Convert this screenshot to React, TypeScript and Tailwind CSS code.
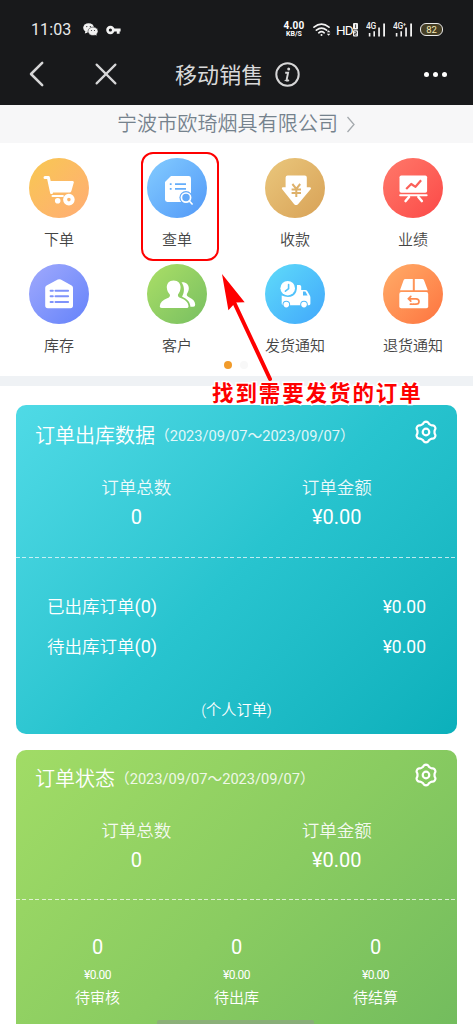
import type { ReactNode } from "react";

const LATIN = "font-['Roboto','Noto_Sans_CJK_SC',sans-serif]";

function StatusBar() {
  return (
    <div className="flex h-[43px] items-end justify-between pl-[31px] pr-[30px] text-white">
      <div className="flex h-[27px] items-center">
        <span className="w-[42px] text-[16px] leading-[27px] tracking-[0.1px] text-[#e9e9ea]">11:03</span>
        <svg className="ml-[10px]" width="15" height="13" viewBox="0 0 15 13">
          <ellipse cx="5.6" cy="4.8" rx="5.4" ry="4.6" fill="#f2f2f2" />
          <path d="M2.4 8l-.6 2.6 3-1.2z" fill="#f2f2f2" />
          <ellipse cx="10" cy="8.3" rx="5" ry="4.2" fill="#f2f2f2" stroke="#18191b" strokeWidth=".5" />
          <path d="M11.6 11.4l1.9 1.3-.2-2.2z" fill="#f2f2f2" />
          <circle cx="3.8" cy="3.6" r=".6" fill="#18191b" />
          <circle cx="7.3" cy="3.6" r=".6" fill="#18191b" />
          <circle cx="8.4" cy="7.4" r=".5" fill="#18191b" />
          <circle cx="11.5" cy="7.4" r=".5" fill="#18191b" />
        </svg>
        <svg className="ml-[8px]" width="15" height="10" viewBox="0 0 15 10" fill="none" stroke="#f2f2f2">
          <circle cx="4.4" cy="5" r="2.9" strokeWidth="2.6" />
          <path d="M7.5 5H14.6M12.2 5V8.8" strokeWidth="2.8" />
        </svg>
      </div>
      <div className="flex h-[27px] items-center">
        <div className="flex w-[22px] flex-col items-center font-bold">
          <span className="text-[10px] leading-[9px] tracking-[0.2px]">4.00</span>
          <span className="text-[7px] leading-[8px]">KB/S</span>
        </div>
        <svg className="ml-[8px]" width="19" height="14" viewBox="0 0 19 14" fill="none" stroke="#f2f2f2" strokeLinecap="round">
          <path d="M1 4.2Q8.5-1.8 16 4.2M3.4 7.2Q8.5 3 13.6 7.2M5.8 9.8Q8.5 7.6 11.2 9.8" strokeWidth="1.7" />
          <circle cx="8.5" cy="12" r="1" fill="#f2f2f2" stroke="none" />
          <path d="M13.8 9.2l1.8-2 1.8 2zM13.8 10.8l1.8 2 1.8-2z" fill="#f2f2f2" stroke="none" />
        </svg>
        <span className="ml-[4px] w-[17px] text-[13.5px] leading-[14px] tracking-[-1px]">HD</span>
        <svg width="6" height="14" viewBox="0 0 6 14">
          <rect x="0" y="0" width="5" height="6.4" rx="1" fill="#f2f2f2" />
          <rect x="0" y="7.2" width="5" height="6.4" rx="1" fill="#f2f2f2" />
          <path d="M2.6 1.4V5M1.4 8.8H3.4V10.4H1.6V12H3.6" stroke="#18191b" strokeWidth=".8" fill="none" />
        </svg>
        <Signal label="4G" />
        <Signal label="4G⁺" />
        <div className="ml-[7px] flex h-[13px] w-[23px] items-center justify-center rounded-[6px] border-[1.5px] border-[#e9e9ea] bg-[#453e25] text-[9.5px] leading-[10px] text-[#f5e8b4]">
          82
        </div>
      </div>
    </div>
  );
}

function Signal({ label }: { label: string }) {
  return (
    <svg className="ml-[7px]" width="20" height="15" viewBox="0 0 20 15" fill="#f2f2f2">
      <text x="0" y="6.8" fontSize="8.4" fontFamily="Roboto" fontWeight="500" letterSpacing="-0.3">{label}</text>
      <path d="M2.8 11h1.6v3.5H2.8zM7.4 9.2H9v5.3H7.4zM12.2 5.4h1.7v9.1h-1.7zM17.2 1.5h1.8v13h-1.8z" />
    </svg>
  );
}

function NavBar() {
  return (
    <div className="flex h-[62px] items-center">
      <svg className="ml-[29px]" width="16" height="26" viewBox="0 0 16 26" fill="none" stroke="#d6d6d7" strokeWidth="2.5" strokeLinecap="round" strokeLinejoin="round">
        <path d="M13.2 1.8L2 13l11.2 11.2" />
      </svg>
      <svg className="ml-[50px]" width="22" height="22" viewBox="0 0 22 22" fill="none" stroke="#d6d6d7" strokeWidth="2.2" strokeLinecap="round">
        <path d="M1.6 1.6l18.8 18.8M20.4 1.6L1.6 20.4" />
      </svg>
      <h1 className="mt-[3px] ml-[58px] w-[90px] text-[22px] leading-[30px] tracking-[0.1px] whitespace-nowrap text-[#d9d9da]">移动销售</h1>
      <svg className="ml-[10px]" width="25" height="25" viewBox="0 0 25 25" fill="none" stroke="#d6d6d7">
        <circle cx="12.5" cy="12.5" r="11.2" strokeWidth="2" />
        <circle cx="13.7" cy="7" r="1.5" fill="#d6d6d7" stroke="none" />
        <path d="M10.2 10.8h2.9l-1.5 7.2q-.2 1.2 2.2.2" strokeWidth="1.9" />
        <path d="M9.6 18.6h4.6" strokeWidth="1" />
      </svg>
      <div className="ml-[124px] flex gap-[4px]">
        <i className="size-[5px] rounded-full bg-white" />
        <i className="size-[5px] rounded-full bg-white" />
        <i className="size-[5px] rounded-full bg-white" />
      </div>
    </div>
  );
}

const actions: { label: string; tone: string; icon: ReactNode }[] = [
  {
    label: "下单",
    tone: "from-[#f8c850] to-[#ffac74]",
    icon: (
      <>
        <path d="M16 19.6h3.4L22.6 34.6" fill="none" stroke="#fff" strokeWidth="3" strokeLinecap="round" strokeLinejoin="round" />
        <path d="M21 23h22.6q1.6 0 1.2 1.6L42.4 33q-.5 1.6-2 1.6H23.4z" />
        <path d="M23.6 38h10.2" stroke="#fff" strokeWidth="2.2" strokeLinecap="round" />
        <circle cx="28.7" cy="42.8" r="2.8" />
        <circle cx="39.9" cy="41.6" r="3.8" fill="none" stroke="#fff" strokeWidth="4" />
      </>
    ),
  },
  {
    label: "查单",
    tone: "from-[#84ccff] to-[#5298f7]",
    icon: (
      <>
        <path d="M24 18h17.6q2.4 0 2.4 2.4V44H20.4Q18 44 18 41.6V24z" />
        <path d="M22.8 26.2h1.8M28 26.2h11M22.8 30.8h1.8M28 30.8h11" stroke="#64adfa" strokeWidth="1.8" />
        <circle cx="39" cy="39.6" r="6.6" fill="#62a9f9" />
        <circle cx="39" cy="39.6" r="4.6" fill="none" stroke="#fff" strokeWidth="1.7" />
        <path d="M42.3 43l2.8 3" stroke="#fff" strokeWidth="1.7" fill="none" strokeLinecap="round" />
      </>
    ),
  },
  {
    label: "收款",
    tone: "from-[#eac77c] to-[#d8a257]",
    icon: (
      <>
        <path d="M22.6 17.6h17.2q2 0 2 2v9.6h2.8q2.4.4.8 2.4L33 46.2q-2 1.8-3.8 0L17.4 31.6q-1.4-2 .6-2.4h2.6V19.6q0-2 2-2z" />
        <path d="M27.4 26l3.9 4.8L35.2 26M26.6 31.4H36M26.6 35H36M31.3 31V39" fill="none" stroke="#deb16a" strokeWidth="2" />
      </>
    ),
  },
  {
    label: "业绩",
    tone: "from-[#ff786a] to-[#fb4747]",
    icon: (
      <>
        <rect x="16.5" y="17.4" width="27.6" height="17.4" rx="1.8" />
        <path d="M17.2 37.2h26.4" stroke="#fff" strokeWidth="2" strokeLinecap="round" />
        <path d="M26 39l-3.4 4M35.4 39l3.4 4" stroke="#fff" strokeWidth="2.6" strokeLinecap="round" />
        <path d="M23.2 31l5-5 4.3 2.8 5.6-6.6" fill="none" stroke="#fb6059" strokeWidth="2.2" strokeLinejoin="round" />
      </>
    ),
  },
  {
    label: "库存",
    tone: "from-[#a0a9fc] to-[#6582fa]",
    icon: (
      <>
        <path d="M28.8 15.6q1.5-.9 3 0L42.6 21.4q1.4.8 1.4 2.4V41.6q0 2.6-2.6 2.6H18.8q-2.6 0-2.6-2.6V23.8q0-1.6 1.4-2.4z" />
        <path d="M21.6 26.7h2.2M26.5 26.7h12.6M21.6 32.3h2.2M26.5 32.3h12.6M21.6 38h2.2M26.5 38h12.6" stroke="#7f93fb" strokeWidth="2" strokeLinecap="round" />
      </>
    ),
  },
  {
    label: "客户",
    tone: "from-[#abdf66] to-[#77bf61]",
    icon: (
      <>
        <path d="M34.5 18.2C39 17.8 42 20.4 41.8 24.6c-.1 2.5-1 4-1.8 5.2-.8 1.8.4 2.6 2 3.4 4 1.8 6 4 6.2 7.4q.1 2.2-2 2.2h-2.8C43.2 38.4 40.8 35.6 36.6 33.4l-1.6-.9c2.6-4.2 2.8-9.8-.5-14.3z" />
        <path d="M26.6 16.4c4.6 0 7.2 3.2 7 7.2-.1 3-1.2 5.2-2.6 6.8-.5 2 .8 2.8 2.6 3.6 5.2 2 7.6 4.4 7.9 8 .1 1.4-.6 2-2 2H14.8c-1.4 0-2.2-.7-2-2 .4-3.6 2.8-6 7.4-7.8 2-.8 3.3-1.8 2.6-3.8-1.6-1.6-2.9-3.8-3-6.8-.2-4 2.2-7.2 6.8-7.2z" />
      </>
    ),
  },
  {
    label: "发货通知",
    tone: "from-[#60dbf9] to-[#42a7fb]",
    icon: (
      <>
        <path d="M16.7 31.6Q23 34.4 28 31.8 32.4 29.2 32 21h2.6q1.6 0 1.6 1.6V26h4q1.5 0 2.2 1.2l2.4 4.2q.6 1 .6 2.2v6.2q0 1.4-1.4 1.4H18.1q-1.4 0-1.4-1.4z" />
        <circle cx="22.7" cy="24.2" r="7.3" />
        <path d="M23.6 20.6v4l-3.2 2.6" fill="none" stroke="#55c4fa" strokeWidth="1.6" strokeLinecap="round" />
        <path d="M38 27.6h2.4l2.2 3.8H38z" fill="#50bafa" />
        <circle cx="21.3" cy="40.6" r="3.8" fill="#4fbbfa" />
        <circle cx="39" cy="40.6" r="3.8" fill="#4fbbfa" />
        <circle cx="21.3" cy="40.6" r="2.8" />
        <circle cx="39" cy="40.6" r="2.8" />
      </>
    ),
  },
  {
    label: "退货通知",
    tone: "from-[#ffac68] to-[#fd733f]",
    icon: (
      <>
        <path d="M22.4 15H29.8V26.2H17L20.6 16.2Q21 15 22.4 15zM31.8 15h7.4q1.4 0 1.8 1.2L44.8 26.2H31.8z" />
        <rect x="16.3" y="28.1" width="28.9" height="16.2" rx="1.8" />
        <path d="M27.8 32.4l-2.4 2.4 2.4 2.4M26 34.8h7q3 0 3 2.7t-3 2.7h-.6M27.4 40.2h1.4M30 40.2h1.2" fill="none" stroke="#fe8b51" strokeWidth="1.7" strokeLinecap="round" />
      </>
    ),
  },
];

function ActionGrid() {
  return (
    <section className="relative h-[233px] bg-white pt-[15px]">
      <div className="grid w-[472px] grid-cols-4">
        {actions.map((a) => (
          <div key={a.label} className="flex h-[106px] flex-col items-center">
            <div className={`size-[60px] rounded-full bg-linear-135 ${a.tone}`}>
              <svg width="60" height="60" viewBox="0 0 60 60" fill="#fff">{a.icon}</svg>
            </div>
            <span className="mt-[11px] text-[15px] leading-[22px] font-[350] text-[#444]">{a.label}</span>
          </div>
        ))}
      </div>
      <div className="absolute top-[218px] left-[224px] flex gap-[8px]">
        <i className="size-[8px] rounded-full bg-[#f19b2b]" />
        <i className="size-[8px] rounded-full bg-[#f8f8f8]" />
      </div>
    </section>
  );
}

const gearOutline = Array.from({ length: 72 }, (_, i) => {
  const a = (i * Math.PI) / 36;
  const c = Math.cos(6 * a);
  const r = 9.4 + 0.9 * Math.sign(c) * Math.pow(Math.abs(c), 0.5);
  return `${(12 + r * Math.sin(a)).toFixed(2)},${(12 - r * Math.cos(a)).toFixed(2)}`;
}).join(" ");

function Gear() {
  return (
    <svg width="24" height="24" viewBox="0 0 24 24" fill="none" stroke="#fff" strokeLinejoin="round">
      <polygon points={gearOutline} strokeWidth="2.2" />
      <circle cx="12" cy="12" r="3.3" strokeWidth="2.2" />
    </svg>
  );
}

function CardTop({ title, size }: { title: string; size: string }) {
  return (
    <div className={`flex flex-col ${size}`}>
      <div className="flex h-[58px] shrink-0 items-center pr-[19px] pl-[19px]">
        <h2 className="mt-[3px] text-[20px] leading-[28px] font-[350]">{title}</h2>
        <span className="mt-[4px] text-[14.7px] leading-[22px] tracking-[-0.03px] whitespace-nowrap opacity-85">（2023/09/07～2023/09/07）</span>
        <div className="mb-[5px] ml-auto">
          <Gear />
        </div>
      </div>
      <div className="grid grid-cols-2 px-[20px] text-center">
        <div className="pt-[13px]">
          <p className="text-[17.5px] leading-[25px] font-[350] opacity-90">订单总数</p>
          <p className="mt-[4px] text-[20px] leading-[25px]">0</p>
        </div>
        <div className="pt-[13px]">
          <p className="text-[17.5px] leading-[25px] font-[350] opacity-90">订单金额</p>
          <p className="mt-[4px] text-[20px] leading-[25px]">¥0.00</p>
        </div>
      </div>
    </div>
  );
}

function Divider() {
  return <div className="h-px bg-[repeating-linear-gradient(90deg,rgba(255,255,255,0.7)_0_4px,transparent_4px_6.5px)]" />;
}

export default function App() {
  return (
    <main className={`relative h-[1024px] w-[473px] overflow-hidden bg-white ${LATIN}`}>
      <header className="h-[105px] bg-[#18191b]">
        <StatusBar />
        <NavBar />
      </header>
      <div className="flex h-[38px] items-center bg-[#f7f7f8] pl-[117px] text-[#75828d]">
        <span className="text-[20px] leading-[28px] font-[350] tracking-[0.1px]">宁波市欧琦烟具有限公司</span>
        <svg className="ml-[8px]" width="10" height="17" viewBox="0 0 10 17" fill="none" stroke="#a4a9ad" strokeWidth="1.3">
          <path d="M1.5 1l6.5 7.5L1.5 16" />
        </svg>
      </div>
      <ActionGrid />
      <div className="h-[10px] bg-[#eff2f5]" />

      <div className="flex flex-col gap-[16px] px-[16px] pt-[19px] text-white">
        <section className="h-[329px] rounded-[10px] bg-linear-135 from-[#4fdae6] via-[#28c4cf] to-[#0bb0bb]">
          <CardTop title="订单出库数据" size="h-[152px]" />
          <Divider />
          <div className="flex flex-col px-[31px] pt-[30px] text-[17.5px] leading-[39.5px] font-[350]">
            <div className="flex h-[39.5px] justify-between"><span>已出库订单<span className="text-[18px] leading-none font-normal">(0)</span></span><span className="font-normal">¥0.00</span></div>
            <div className="flex h-[39.5px] justify-between"><span>待出库订单<span className="text-[18px] leading-none font-normal">(0)</span></span><span className="font-normal">¥0.00</span></div>
          </div>
          <p className="mt-[31px] text-center text-[15.2px] leading-[24px] font-[350]">(个人订单)</p>
        </section>

        <section className="h-[330px] rounded-[10px] bg-linear-135 from-[#a1dc66] via-[#8acc61] to-[#6fba5d]">
          <CardTop title="订单状态" size="-mt-[2px] h-[151px]" />
          <Divider />
          <div className="grid grid-cols-3 px-[12px] pt-[33px] text-center">
            {["待审核", "待出库", "待结算"].map((label) => (
              <div key={label} className="flex flex-col">
                <span className="text-[20px] leading-[28px]">0</span>
                <span className="mt-[4px] text-[12px] leading-[20px] tracking-[-0.5px]">¥0.00</span>
                <span className="mt-[2px] text-[15px] leading-[22px] font-[350]">{label}</span>
              </div>
            ))}
          </div>
        </section>
      </div>

      <div className="absolute bottom-0 left-[157px] h-[4px] w-[157px] rounded-t-[2px] bg-[#8f9f88]/60" />

      <div className="absolute top-[152px] left-[141px] h-[109px] w-[78px] rounded-[12px] border-2 border-[#fe0000]" />
      <svg className="absolute top-[270px] left-[218px]" width="58" height="114" viewBox="0 0 58 114">
        <path d="M15 30L52 109" stroke="#fe0000" strokeWidth="4" strokeLinecap="round" />
        <path d="M4 4L26.7 32.3 17.5 32.6 10.4 40.3z" fill="#fe0000" />
      </svg>
      <p className="absolute top-[379px] left-[212px] text-[21.5px] leading-[30px] font-bold tracking-[1.9px] whitespace-nowrap text-[#fe0000] [paint-order:stroke_fill] [-webkit-text-stroke:3px_white]">找到需要发货的订单</p>
    </main>
  );
}
